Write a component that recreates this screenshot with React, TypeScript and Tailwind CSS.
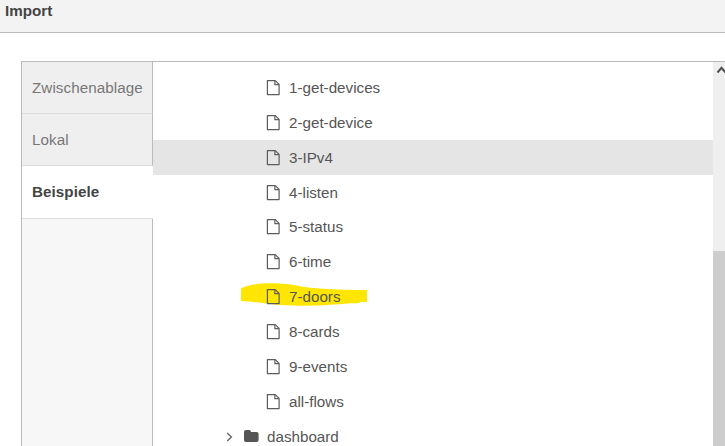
import React from "react";

const rows = ["1-get-devices", "2-get-device", "3-IPv4", "4-listen", "5-status", "6-time", "7-doors", "8-cards", "9-events", "all-flows"];

function FileIcon() {
  return (
    <svg width="14" height="16" viewBox="0 0 14 16" fill="none" stroke="#5c5c5c" strokeWidth="1.2" strokeLinejoin="round" className="shrink-0">
      <path d="M1.4 .6H9.3L13.1 4.4V14.6H1.4Z" />
      <path d="M8.9 .9V4.7H12.9" />
    </svg>
  );
}

function Row({ name }: { name: string }) {
  const height = name === "4-listen" ? "h-[34px]" : "h-[35px]";
  const background = name === "3-IPv4" ? "bg-[#e5e5e5]" : "";
  return (
    <div className={`relative flex shrink-0 items-start pl-[113px] pt-[10px] ${height} ${background}`}>
      {name === "7-doors" && (
        <svg className="absolute left-[88px] top-[3px]" width="127" height="25" viewBox="0 0 127 25">
          <path d="M0 6.5C5 3.5 15 1.3 29 1.2C53 1 58 5.5 79 6.5C93 7.8 112 8 126 8V20H118.5V21C95 21.7 90 23.7 62 23.7C35 24 20 20 0 19Z" fill="#ffe600" />
        </svg>
      )}
      <div className="relative flex items-start">
        <FileIcon />
        <span className="-mt-px ml-[9px] text-[15.2px] leading-[18px]">{name}</span>
      </div>
    </div>
  );
}

export default function App() {
  return (
    <div className="flex h-[446px] w-[725px] flex-col overflow-hidden bg-white font-['Liberation_Sans',Arial,sans-serif] text-[#555]">
      <header className="h-[33px] shrink-0 border-b border-[#bbb] bg-[#f3f3f3] pl-[5px] pt-[2px] text-[15.2px] font-bold leading-[18px] text-[#444]">Import</header>
      <main className="ml-[21px] mt-[28px] flex min-h-0 flex-1 border-l border-t border-[#bbb]">
        <nav className="flex w-[131px] shrink-0 flex-col text-[15.2px] leading-[18px] tracking-[0.07px] text-[#777]">
          <div className="h-[52px] shrink-0 border-b border-r border-b-[#ddd] border-r-[#bbb] bg-[#efefef] pl-[10px] pt-[17px]">Zwischenablage</div>
          <div className="h-[52px] shrink-0 border-b border-r border-b-[#ddd] border-r-[#bbb] bg-[#efefef] pl-[10px] pt-[17px]">Lokal</div>
          <div className="h-[53px] shrink-0 border-b border-[#ddd] bg-white pl-[10px] pt-[17px] font-bold text-[#444]">Beispiele</div>
          <div className="flex-1 border-r border-[#bbb] bg-[#f7f7f7]" />
        </nav>
        <section className="flex w-[560px] shrink-0 flex-col overflow-hidden pt-[8px]">
          {rows.map((name) => <Row key={name} name={name} />)}
          <div className="flex h-[35px] shrink-0 items-start pl-[73px] pt-[10px]">
            <svg className="mt-[1px] shrink-0" width="8" height="14" viewBox="0 0 8 14" fill="none" stroke="#666" strokeWidth="1.4"><path d="M1.2 3L5.4 7L1.2 11" /></svg>
            <svg className="ml-[10px] shrink-0" width="15" height="14" viewBox="0 0 15 14" fill="#555"><path d="M0 3Q0 1 2 1H5Q7 1 7 3H12.6Q14.6 3 14.6 5V11Q14.6 13 12.6 13H2Q0 13 0 11Z" /></svg>
            <span className="-mt-px ml-[8px] text-[15.2px] leading-[18px]">dashboard</span>
          </div>
        </section>
        <aside className="flex flex-1 flex-col bg-[#efefef]">
          <svg className="h-[189px] w-[12px] shrink-0" viewBox="0 0 12 189" fill="none" stroke="#505050" strokeWidth="2"><path d="M4.5 10.5L8.5 5.8L12.5 10.5" /></svg>
          <div className="flex-1 bg-[#cdcdcd]" />
        </aside>
      </main>
    </div>
  );
}
